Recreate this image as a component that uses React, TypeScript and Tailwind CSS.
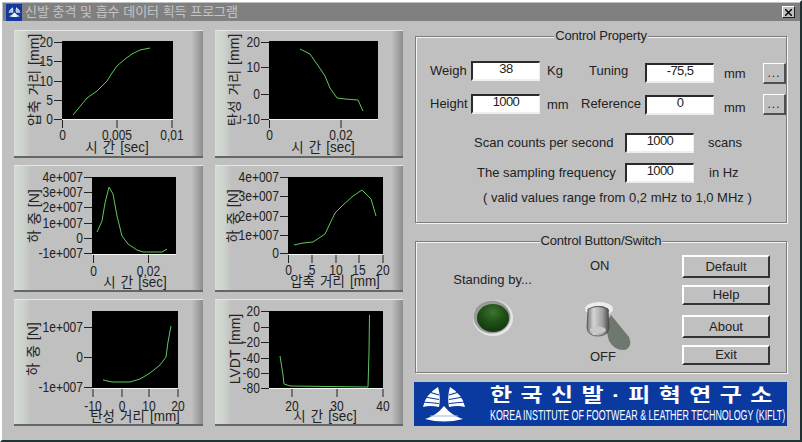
import React from 'react';

type Tick = [string, number];

interface ChartProps {
  box: [number, number, number, number];
  plot: [number, number, number, number];
  yTicks: Tick[];
  xTicks: Tick[];
  xTitle: [string, number, number];
  yTitle: [string, number, number];
  labelY: number;
  points: string;
}

const KR = '"Liberation Sans", "Noto Sans CJK KR", sans-serif';

const charts: ChartProps[] = [
  {
    box: [14, 30, 189, 128],
    plot: [62, 40, 173, 119],
    yTicks: [['20', 41], ['15', 60], ['10', 80], ['5', 99], ['0', 118]],
    xTicks: [['0', 62.5], ['0,005', 117], ['0,01', 172]],
    xTitle: ['시 간 [sec]', 117, 151],
    yTitle: ['압축 거리 [mm]', 39, 79],
    labelY: 139,
    points: '73,114 82,103 87,97 97,90 107,80 112,72 117,65 125,58 132,53 140,49 150,47',
  },
  {
    box: [215, 30, 188, 128],
    plot: [269, 40, 378, 119],
    yTicks: [['20', 41], ['10', 66], ['0', 93], ['-10', 118]],
    xTicks: [['0', 269.5], ['0,02', 341]],
    xTitle: ['시 간 [sec]', 323, 151],
    yTitle: ['탄성 거리 [mm]', 239, 79],
    labelY: 139,
    points: '300,48 310,53 317,63 325,75 330,87 337,97 345,98 358,99 363,110',
  },
  {
    box: [14, 165, 189, 127],
    plot: [92, 176, 176, 254],
    yTicks: [['4e+007', 176], ['3e+007', 191], ['2e+007', 206], ['1e+007', 222], ['0', 237], ['-1e+007', 252]],
    xTicks: [['0', 93.5], ['0,02', 148.5]],
    xTitle: ['시 간 [sec]', 135, 286],
    yTitle: ['하 중 [N]', 39, 215],
    labelY: 275,
    points: '97,231 102,220 105,202 109,186 113,193 117,215 122,235 128,243 137,249 143,251 162,251 167,248',
  },
  {
    box: [215, 165, 188, 127],
    plot: [288, 176, 383, 254],
    yTicks: [['4e+007', 176], ['3e+007', 195], ['2e+007', 215], ['1e+007', 234], ['0', 252]],
    xTicks: [['0', 288.5], ['5', 312], ['10', 336], ['15', 359], ['20', 383]],
    xTitle: ['압축 거리 [mm]', 335, 285],
    yTitle: ['하 중 [N]', 238, 215],
    labelY: 274,
    points: '294,244 303,242 313,241 325,233 335,212 343,204 353,195 362,189 371,198 376,215',
  },
  {
    box: [14, 300, 189, 127],
    plot: [92, 311, 178, 389],
    yTicks: [['1e+007', 327], ['0', 357], ['-1e+007', 387]],
    xTicks: [['-10', 93], ['0', 122], ['10', 149], ['20', 178]],
    xTitle: ['탄성 거리 [mm]', 135, 421],
    yTitle: ['하 중 [N]', 38, 349],
    labelY: 411,
    points: '103,380 112,382 130,382 140,379 150,373 160,365 166,357 168,342 171,326',
  },
  {
    box: [215, 300, 188, 127],
    plot: [269, 311, 383, 389],
    yTicks: [['20', 311], ['0', 327], ['-20', 342], ['-40', 358], ['-60', 373], ['-80', 388]],
    xTicks: [['20', 292], ['30', 337], ['40', 383]],
    xTitle: ['시 간 [sec]', 325, 421],
    yTitle: ['LVDT [mm]', 240, 349],
    labelY: 411,
    points: '280,356 283,375 284,384 290,386 368,387 369,352 369.5,315',
  },
];

const ChartLabel = ({ x, y, text, anchor }: { x: number; y: number; text: string; anchor: 'end' | 'middle' }) => (
  <text
    transform={`translate(${x} ${y}) scale(0.86 1)`}
    textAnchor={anchor}
    fontSize={14}
    fontFamily={KR}
    fill="#222"
  >
    {text}
  </text>
);

const Chart = ({ box, plot, yTicks, xTicks, xTitle, yTitle, labelY, points }: ChartProps) => {
  const [x1, y1, x2, y2] = plot;
  return (
    <div
      className="border-t border-t-[#e4e8e4] border-b-2 border-b-[#666666] bg-[linear-gradient(90deg,#d4dcd4_0,#ccd2cc_5%,#c0c0c0_9%,#c0c0c0_94%,#8c8c8c_100%)]"
      style={{ width: box[2], height: box[3] }}
    >
      <svg className="block" width={box[2]} height={box[3] - 3} viewBox={`${box[0]} ${box[1]} ${box[2]} ${box[3] - 3}`}>
        <rect x={x1} y={y1} width={x2 - x1} height={y2 - y1} fill="#000" />
        <line x1={x1} x2={x2} y1={y2 - 0.5} y2={y2 - 0.5} stroke="#f4f4f4" />
        {yTicks.map(([label, y]) => (
          <g key={label}>
            <line x1={x1 - 8} x2={x1} y1={y + 0.5} y2={y + 0.5} stroke="#222" />
            <ChartLabel x={x1 - 9} y={y + 5} text={label} anchor="end" />
          </g>
        ))}
        {xTicks.map(([label, x]) => (
          <g key={label}>
            <line x1={x} x2={x} y1={y2} y2={y2 + 8} stroke="#222" />
            <ChartLabel x={x} y={labelY} text={label} anchor="middle" />
          </g>
        ))}
        <polyline points={points} fill="none" stroke="#5fc85f" strokeWidth={1} />
        <text
          transform={`translate(${xTitle[1]} ${xTitle[2]}) scale(0.96 1)`}
          textAnchor="middle"
          fontSize={14}
          wordSpacing={1.5}
          fontFamily={KR}
          fill="#222"
        >
          {xTitle[0]}
        </text>
        <text
          transform={`translate(${yTitle[1]} ${yTitle[2]}) rotate(-90)`}
          textAnchor="middle"
          fontSize={14}
          wordSpacing={1}
          fontFamily={KR}
          fill="#222"
        >
          {yTitle[0]}
        </text>
      </svg>
    </div>
  );
};

const Field = ({ value }: { value: string }) => (
  <div className="w-[69px] h-[20px] shrink-0 bg-white border-t-2 border-l-2 border-t-[#2a2a2a] border-l-[#2a2a2a] border-r border-b-2 border-r-[#eeeeee] border-b-[#eeeeee] text-center text-[13px] leading-[11px] tracking-[-0.6px] text-[#222]">
    {value}
  </div>
);

const Logo = ({ className }: { className: string }) => (
  <svg className={className} viewBox="0 0 46 36">
    <path d="M2 21 Q4 9 17 1 Q20 11 18 21 Q9 19 2 21Z" fill="#fff" />
    <path d="M44 21 Q42 9 29 1 Q26 11 28 21 Q37 19 44 21Z" fill="#fff" />
    <path d="M8 6 L18 9 M4 11 L18 13.5 M2 16 L18 17.5 M38 6 L28 9 M42 11 L28 13.5 M44 16 L28 17.5" stroke="#0a3aa0" strokeWidth={1.2} />
    <path d="M4 33 Q15 30 23 20 Q31 30 42 33 Q23 38 4 33Z" fill="#fff" />
    <path d="M9 30 L37 30" stroke="#9fb4e0" strokeWidth={1} />
  </svg>
);

const Group = ({ title, className, children }: { title: string; className: string; children: React.ReactNode }) => (
  <div className={`relative border border-[#7c7c7c] shadow-[inset_1px_1px_0_#f4f4f4,1px_1px_0_#f4f4f4] ${className}`}>
    <span className="absolute -top-[9px] left-0 right-0 mx-auto w-fit bg-[#c0c0c0] px-[1px] text-[13px] leading-4 tracking-[-0.2px] text-[#222]">
      {title}
    </span>
    {children}
  </div>
);

const Dots = () => (
  <div className="w-[23px] h-[21px] mt-[2px] shrink-0 bg-[#c0c0c0] border-t border-l border-white border-r-2 border-b-2 border-r-[#505050] border-b-[#505050] text-center text-[12px] leading-[18px] tracking-[1px] text-[#222]">
    ...
  </div>
);

const PushButton = ({ label, className }: { label: string; className: string }) => (
  <div className={`w-[88px] flex items-center justify-center bg-[#c0c0c0] border-t-2 border-l-2 border-white border-r-2 border-b-2 border-r-[#333333] border-b-[#333333] text-[13px] text-[#222] ${className}`}>
    {label}
  </div>
);

export default function App() {
  return (
    <div
      className="w-[802px] h-[442px] overflow-hidden bg-[#c0c0c0] border-t-2 border-l-2 border-t-white border-l-white border-r-2 border-r-[#203030] border-b-2 border-b-[#1c3434] flex flex-col"
      style={{ fontFamily: KR }}
    >
      <div className="h-[18px] mt-px ml-px flex items-center bg-[#808080] shrink-0">
        <div className="w-[16px] h-[17px] ml-[3px] bg-[#123a9c] flex items-center justify-center">
          <Logo className="w-[13px] h-[12px]" />
        </div>
        <span className="ml-[3px] text-[13px] text-[#c4c4c4]">신발 충격 및 흡수 데이터 획득 프로그램</span>
        <div className="ml-auto mr-[5px] w-[13px] h-[12px] bg-[#c0c0c0] border border-t-white border-l-white border-r-[#222] border-b-[#222] flex items-center justify-center">
          <svg width="7" height="7" viewBox="0 0 7 7">
            <path d="M0 0 L7 7 M7 0 L0 7" stroke="#000" strokeWidth={1.4} />
          </svg>
        </div>
      </div>

      <div className="flex pl-[12px] pt-[9px]">
        <div className="grid grid-cols-[189px_188px] grid-rows-[128px_127px_127px] gap-x-[12px] gap-y-[7px] shrink-0">
          {charts.map((c) => (
            <Chart key={c.box.join()} {...c} />
          ))}
        </div>

        <div className="ml-[12px] w-[372px] pt-[6px] flex flex-col">
          <Group title="Control Property" className="h-[187px] pt-[24px] text-[13px] leading-4 text-[#222]">
            <div className="flex items-start h-[22px] pl-[14px]">
              <span className="w-[41px] mt-[2px]">Weigh</span>
              <Field value="38" />
              <span className="w-[49px] pl-[7px] mt-[2px]">Kg</span>
              <span className="w-[56px] mt-[2px]">Tuning</span>
              <div className="mt-[2px]"><Field value="-75,5" /></div>
              <span className="w-[49px] pl-[10px] mt-[5px]">mm</span>
              <Dots />
            </div>
            <div className="flex items-start h-[22px] pl-[14px] mt-[11px]">
              <span className="w-[41px] mt-[2px]">Height</span>
              <Field value="1000" />
              <span className="w-[41px] pl-[7px] mt-[3px]">mm</span>
              <span className="w-[64px] mt-[2px]">Reference</span>
              <div className="mt-px"><Field value="0" /></div>
              <span className="w-[49px] pl-[10px] mt-[6px]">mm</span>
              <div className="-mt-[2px]"><Dots /></div>
            </div>
            <div className="flex items-center mt-[17px] pl-[58px]">
              <span className="w-[151px]">Scan counts per second</span>
              <Field value="1000" />
              <span className="ml-[14px]">scans</span>
            </div>
            <div className="flex items-center mt-[10px] pl-[61px]">
              <span className="w-[148px]">The sampling frequency</span>
              <Field value="1000" />
              <span className="ml-[15px]">in Hz</span>
            </div>
            <p className="mt-[7px] pl-[67px]">( valid values range from 0,2 mHz to 1,0 MHz )</p>
          </Group>

          <Group title="Control Button/Switch" className="mt-[18px] h-[132px] flex text-[13px] leading-4 text-[#222]">
            <div className="w-[153px] pt-[30px] flex flex-col items-center">
              <span>Standing by...</span>
              <svg className="mt-[10px]" width="46" height="40" viewBox="0 0 46 40">
                <defs>
                  <radialGradient id="led" cx="0.5" cy="0.3" r="0.75">
                    <stop offset="0" stopColor="#3f7230" />
                    <stop offset="0.5" stopColor="#1f4f17" />
                    <stop offset="1" stopColor="#10330e" />
                  </radialGradient>
                </defs>
                <ellipse cx="23" cy="20" rx="20" ry="18" fill="#e6e6e6" />
                <ellipse cx="22" cy="19" rx="18.5" ry="16.5" fill="#9a9a9a" />
                <ellipse cx="23" cy="20" rx="16" ry="14" fill="url(#led)" />
              </svg>
            </div>
            <div className="w-[72px] pt-[16px]">
              <span className="block ml-[21px]">ON</span>
              <svg className="mt-[21px] block" width="72" height="56" viewBox="0 0 72 56">
                <defs>
                  <linearGradient id="lever" x1="0" x2="1" y1="0" y2="0">
                    <stop offset="0" stopColor="#777" />
                    <stop offset="0.3" stopColor="#d4d4d4" />
                    <stop offset="0.7" stopColor="#a0a0a0" />
                    <stop offset="1" stopColor="#4c4c4c" />
                  </linearGradient>
                </defs>
                <path d="M36 30 L42 20 L60 42 Q64 52 56 55 Q46 56 40 46Z" fill="#6f786f" />
                <ellipse cx="30" cy="14" rx="14" ry="7" fill="#ececec" />
                <ellipse cx="30" cy="16" rx="10" ry="5" fill="#666" />
                <path d="M19 14 Q29 9 39 14 L40 33 Q39 41 29 41 Q19 41 18 33Z" fill="url(#lever)" stroke="#444" strokeWidth={0.7} />
                <ellipse cx="29" cy="35" rx="8" ry="3.5" fill="#c8c8c8" />
              </svg>
              <span className="block ml-[21px] -mt-[2px]">OFF</span>
            </div>
            <div className="ml-[41px] pt-[13px] flex flex-col">
              <PushButton label="Default" className="h-[23px]" />
              <PushButton label="Help" className="h-[20px] mt-[7px]" />
              <PushButton label="About" className="h-[23px] mt-[10px]" />
              <PushButton label="Exit" className="h-[20px] mt-[7px]" />
            </div>
          </Group>

          <div className="mt-[9px] -ml-px w-[373px] h-[44px] bg-[#0a3aa0] flex items-center text-white">
            <Logo className="w-[46px] h-[36px] ml-[7px] shrink-0" />
            <div className="ml-[23px] flex flex-col">
              <span className="font-bold text-[24px] leading-[23px] tracking-[8.4px] whitespace-nowrap origin-top scale-y-[0.8]">한국신발·피혁연구소</span>
              <span className="text-[14px] leading-[13px] whitespace-nowrap origin-left scale-x-[0.635]">
                KOREA INSTITUTE OF FOOTWEAR &amp; LEATHER TECHNOLOGY (KIFLT)
              </span>
            </div>
          </div>
        </div>
      </div>
    </div>
  );
}
